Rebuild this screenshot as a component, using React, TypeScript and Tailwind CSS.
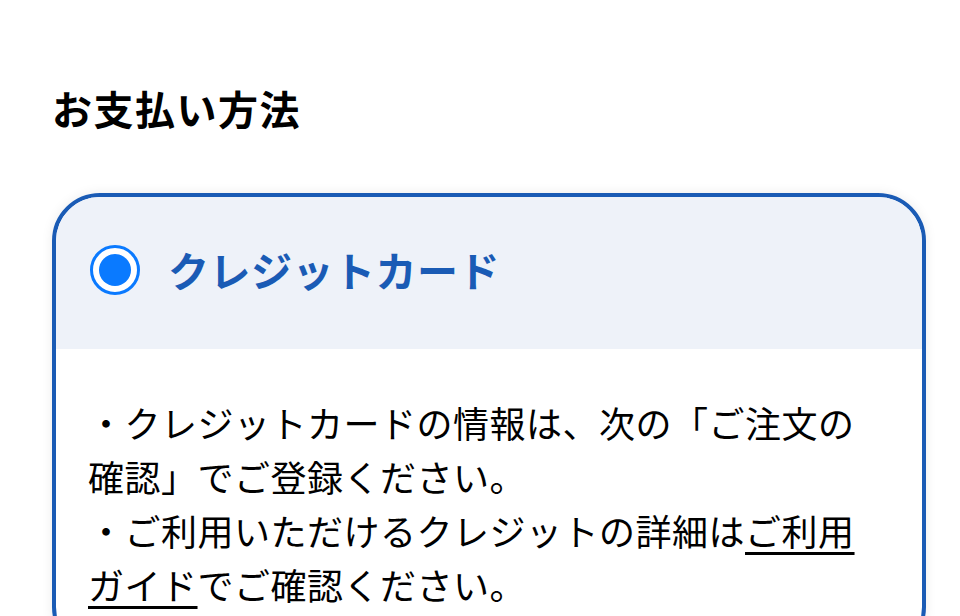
export default function App() {
  return (
    <div className="min-h-[616px] w-[960px] bg-white overflow-hidden font-['Noto_Sans_CJK_JP',sans-serif] text-black">
      <div className="pl-[52px] pr-[34px] pt-[84px]">
        <h2 className="text-[40px] font-bold leading-[48px] tracking-[1.5px]">お支払い方法</h2>
        <div className="mt-[61px] rounded-[48px] border-[4px] border-[#1a5bb5] overflow-hidden shadow-[0_0_12px_rgba(0,0,0,0.08)]">
          <div className="flex items-center gap-[28px] bg-[#eef2f9] pl-[34px] h-[152px] pb-[6px]">
            <span className="flex h-[50px] w-[50px] items-center justify-center rounded-full border-[3px] border-[#0a7aff] bg-white">
              <span className="h-[32px] w-[32px] rounded-full bg-[#0a7aff]" />
            </span>
            <span className="text-[41px] font-bold text-[#1a5bb5] tracking-[0.5px]">クレジットカード</span>
          </div>
          <div className="pl-[32px] pr-[50px] pt-[46px] pb-[40px] text-[36px] leading-[54px] tracking-[0.5px]">
            <p>・クレジットカードの情報は、次の「ご注文の確認」でご登録ください。</p>
            <p>
              ・ご利用いただけるクレジットの詳細は
              <a className="underline underline-offset-[6px] decoration-[3px]">ご利用ガイド</a>
              でご確認ください。
            </p>
          </div>
        </div>
      </div>
    </div>
  );
}
